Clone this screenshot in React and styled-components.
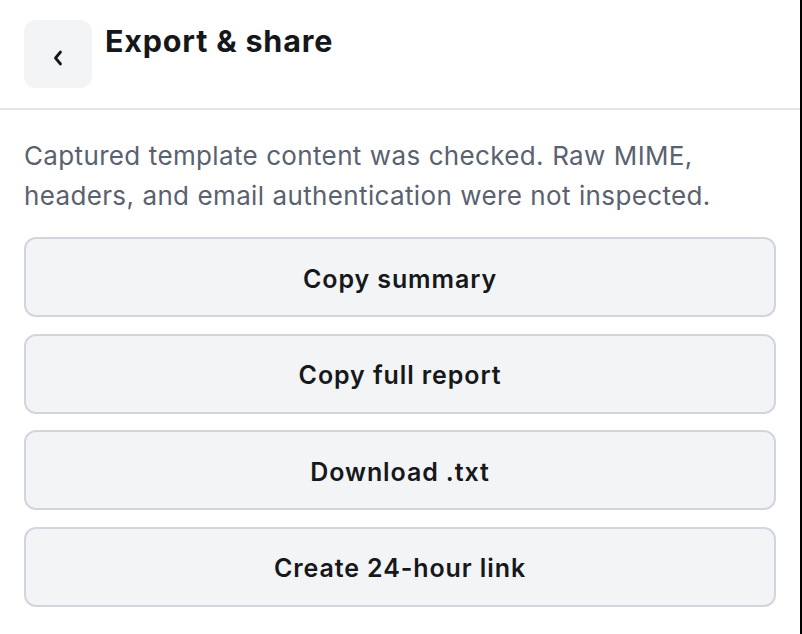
import React from "react";
import styled, { createGlobalStyle } from "styled-components";

const Global = createGlobalStyle`
  html { background: #000; }
  body {
    margin: 0;
    font-family: Inter, "Noto Sans", sans-serif;
    -webkit-font-smoothing: antialiased;
  }
`;

const Page = styled.div`
  width: 800px;
  min-height: 100vh;
  background: #fff;
`;

const Header = styled.header`
  display: flex;
  align-items: flex-start;
  gap: 13px;
  padding: 20px 24px 20px;
  border-bottom: 2px solid #e2e6ea;
`;

const BackButton = styled.button`
  width: 68px;
  height: 68px;
  border: none;
  border-radius: 12px;
  background: #f3f4f6;
  display: flex;
  align-items: center;
  justify-content: center;
  padding: 8px 0 0;
  margin: 0;
  cursor: pointer;
`;

const Title = styled.h1`
  margin: 0;
  font-size: 30.5px;
  line-height: 42px;
  font-weight: 700;
  color: #16171a;
  letter-spacing: 0.8px;
`;

const Body = styled.main`
  display: flex;
  flex-direction: column;
  padding: 26px 24px 0;
`;

const Note = styled.p`
  margin: 0 0 21px;
  font-size: 26px;
  line-height: 40px;
  color: #5a6170;
  letter-spacing: 0.35px;
  word-spacing: 0.5px;
`;

const Actions = styled.div`
  display: flex;
  flex-direction: column;
  gap: 16.5px;
`;

const ActionButton = styled.button`
  height: 80px;
  width: 100%;
  box-sizing: border-box;
  border: 2px solid #d2d6dc;
  border-radius: 12px;
  background: #f3f4f6;
  padding: 3px 0 0;
  font-family: inherit;
  font-size: 25px;
  font-weight: 600;
  letter-spacing: 0.9px;
  color: #17181b;
  cursor: pointer;
`;

export default function App() {
  return (
    <>
      <Global />
      <Page>
        <Header>
          <BackButton aria-label="Back">
            <svg width="12" height="18" viewBox="0 0 12 18" fill="none">
              <polyline
                points="8.5,3 3.5,9 8.5,15"
                stroke="#16171a"
                strokeWidth="2.8"
                strokeLinecap="round"
                strokeLinejoin="round"
              />
            </svg>
          </BackButton>
          <Title>Export &amp; share</Title>
        </Header>
        <Body>
          <Note>
            Captured template content was checked. Raw MIME, headers, and email
            authentication were not inspected.
          </Note>
          <Actions>
            <ActionButton>Copy summary</ActionButton>
            <ActionButton>Copy full report</ActionButton>
            <ActionButton>Download .txt</ActionButton>
            <ActionButton>Create 24-hour link</ActionButton>
          </Actions>
        </Body>
      </Page>
    </>
  );
}
